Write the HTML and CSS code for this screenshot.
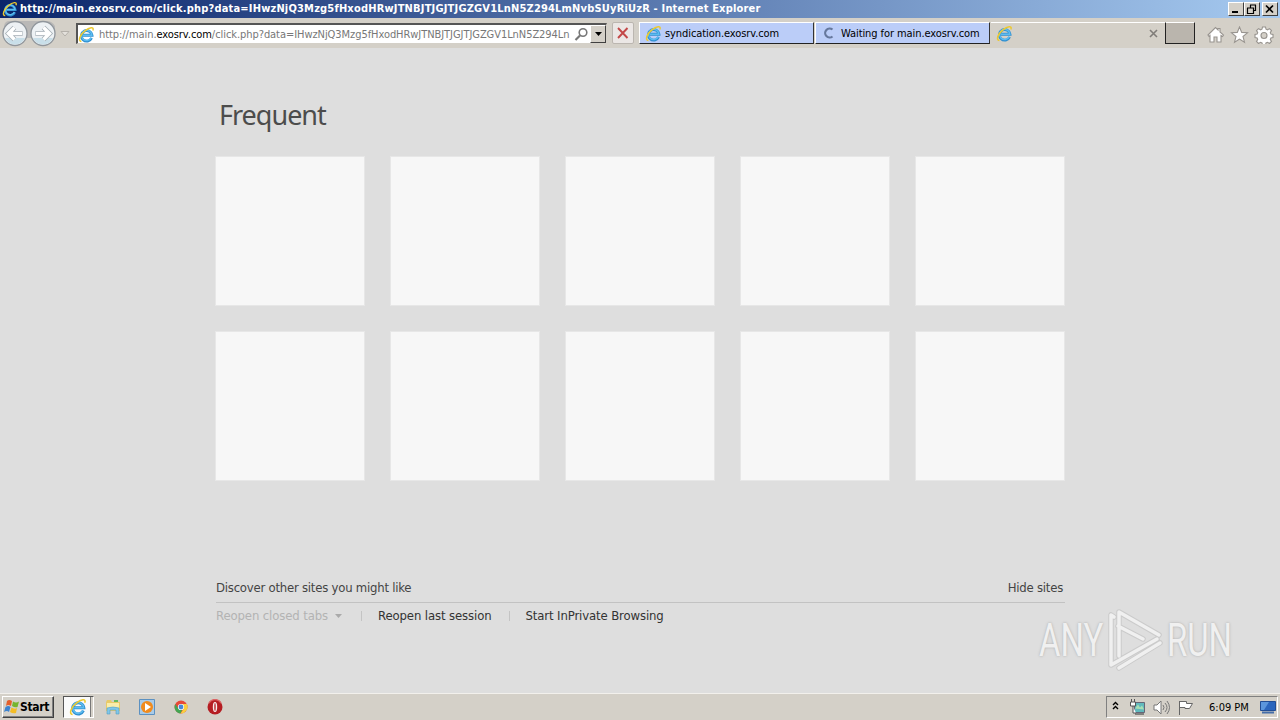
FILE: index.html
```
<!DOCTYPE html>
<html lang="en">
<head>
    <meta charset="UTF-8">
    <title>Internet Explorer</title>
    <link rel="stylesheet" href="styles.css">
</head>
<body>
    <!-- Shared IE logo -->
    <svg class="defs" width="0" height="0">
        <symbol id="ie" viewBox="0 0 16 16">
            <path d="M12.8 11.3A5 5 0 1 1 13.2 8.7H4.4" fill="none" stroke="#2f8fd0" stroke-width="2.6"/>
            <path d="M12.5 11A4.8 4.8 0 1 1 13 8.6H4.6" fill="none" stroke="#5cbcf0" stroke-width="1.4"/>
            <path d="M3.2 14.6C-.4 14.4 1.800 8.200 6.500 4.600C10.500 1.200 15.600 .2 14 4.200" fill="none" stroke="#ecc92f" stroke-width="1.400"/>
        </symbol>
    </svg>

    <div class="titlebar">
        <svg class="title-icon" width="16" height="16"><use href="#ie"/></svg>
        <span class="title-text">http://main.exosrv.com/click.php?data=IHwzNjQ3Mzg5fHxodHRwJTNBJTJGJTJGZGV1LnN5Z294LmNvbSUyRiUzR - Internet Explorer</span>
        <div class="window-buttons">
            <span class="win-btn"><svg width="14" height="12"><path d="M3 9h6" stroke="#000" stroke-width="2"/></svg></span>
            <span class="win-btn"><svg width="14" height="12"><path d="M5 2h6M5.500 2v3M10.500 2v5.500H9M2 5h7M2.500 5v5.500h6V5" fill="none" stroke="#000" stroke-width="1.200"/></svg></span>
            <span class="win-btn close"><svg width="14" height="12"><path d="M3 2.500l7 7M10 2.500l-7 7" stroke="#000" stroke-width="1.700"/></svg></span>
        </div>
    </div>

    <div class="navbar">
        <svg class="nav-arrows" width="58" height="28" viewBox="0 0 58 28">
            <path d="M9 2h38q5 0 8 5v12H4V7q1-5 5-5z" fill="#b9b8b7"/>
            <circle cx="15" cy="14.5" r="12" fill="#edf1f4" stroke="#90969c" stroke-width="1.3"/>
            <circle cx="43" cy="14.5" r="12" fill="#edf1f4" stroke="#90969c" stroke-width="1.3"/>
            <path d="M5 19a11 11 0 0 0 20 0zM33 19a11 11 0 0 0 20 0z" fill="#c9dfe9"/>
            <path d="M22.500 14.500H10M14.500 8.500l-6 6 6 6M35.500 14.500H48M43.500 8.500l6 6-6 6" fill="none" stroke="#a3adb4" stroke-width="5"/>
            <path d="M22 14.500H10M14.500 8.500l-6 6 6 6M36 14.500H48M43.500 8.500l6 6-6 6" fill="none" stroke="#fff" stroke-width="3.500"/>
        </svg>
        <svg class="nav-history" width="10" height="8"><path d="M1 1.500h8L5 6z" fill="#e4e1dc" stroke="#b5b1ab"/></svg>
        <div class="address">
            <svg width="17" height="17"><use href="#ie"/></svg>
            <span class="url">http://main.<b>exosrv.com</b>/click.php?data=IHwzNjQ3Mzg5fHxodHRwJTNBJTJGJTJGZGV1LnN5Z294Ln</span>
            <svg class="search" width="15" height="15"><circle cx="9" cy="5.500" r="3.800" fill="none" stroke="#777" stroke-width="1.600"/><path d="M6 8.500L1.500 13" stroke="#777" stroke-width="2.200"/></svg>
            <span class="dropdown"><svg width="7" height="4"><path d="M0 0h7L3.500 4z"/></svg></span>
        </div>
        <span class="stop"><svg width="12" height="12"><path d="M1 1l9.500 10M10.500 1L1 11" stroke="#c34848" stroke-width="1.900"/></svg></span>
        <div class="tab">
            <svg width="17" height="17"><use href="#ie"/></svg>
            <span class="tab-first">syndication.exosrv.com</span>
        </div>
        <div class="tab">
            <svg width="16" height="16"><path d="M11.500 4.500A4.500 4.500 0 1 0 11.500 11.500" fill="none" stroke="#66789d" stroke-width="2.200"/></svg>
            <span class="tab-second">Waiting for main.exosrv.com</span>
        </div>
        <div class="tab active">
            <svg width="17" height="17"><use href="#ie"/></svg>
            <svg class="tab-close" width="9" height="9"><path d="M1 1l7 7M8 1L1 8" stroke="#807d79" stroke-width="1.600"/></svg>
        </div>
        <span class="new-tab"></span>
        <svg class="tools" width="68" height="18" viewBox="0 0 68 18" fill="#fff" stroke="#98948f" stroke-width="1.100">
            <path d="M1 9l7.500-7.500 2.500 2.400V2.500h2v3.500L16.500 9l-1 1.500-1.500-1V16h-4v-5H7v5H3V9.500L2 10.500z"/>
            <path d="M32.500 1l2.200 5.400 5.800.4-4.500 3.700 1.500 5.700-5-3.100-5 3.100 1.500-5.700-4.500-3.700 5.800-.4z"/>
            <path d="M55.500 1h3l.5 2.200 1.500.6 2-1.200 2 2-1.200 2 .6 1.500 2.100.4v3l-2.100.5-.6 1.500 1.200 2-2 2-2-1.200-1.500.6-.5 2.100h-3l-.5-2.100-1.500-.6-2 1.200-2-2 1.200-2-.6-1.500-2.100-.5v-3l2.100-.4.600-1.500-1.200-2 2-2 2 1.200 1.500-.6z"/>
            <circle cx="57" cy="9.500" r="3" fill="#d4d0c8"/>
        </svg>
    </div>

    <div class="page">
        <div class="content">
            <h1>Frequent</h1>
            <div class="tiles">
                <div class="tile"></div>
                <div class="tile"></div>
                <div class="tile"></div>
                <div class="tile"></div>
                <div class="tile"></div>
                <div class="tile"></div>
                <div class="tile"></div>
                <div class="tile"></div>
                <div class="tile"></div>
                <div class="tile"></div>
            </div>
            <div class="discover">
                <span class="link-discover">Discover other sites you might like</span>
                <span class="link-hide">Hide sites</span>
            </div>
            <div class="links">
                <span class="link-closed">Reopen closed tabs</span>
                <svg class="caret" width="7" height="4"><path d="M0 0h7L3.500 4z" fill="#aaa"/></svg>
                <span class="link-last">Reopen last session</span>
                <span class="link-private">Start InPrivate Browsing</span>
            </div>
        </div>

        <!-- Watermark -->
        <div class="watermark">
            <span class="any">ANY</span>
            <svg width="58" height="64" viewBox="0 0 58 64" fill="none" stroke-linejoin="round" stroke-linecap="round">
                <g stroke="#cbcbcb" stroke-width="5.500">
                    <path d="M12 48V4l40 23M7 9L4 7v50l46-26M11 18l25 13M12 60l41-25"/>
                </g>
                <g stroke="#f0f0f0" stroke-width="3.500">
                    <path d="M12 48V4l40 23M7 9L4 7v50l46-26M11 18l25 13M12 60l41-25"/>
                </g>
            </svg>
            <span class="run">RUN</span>
        </div>
    </div>

    <div class="taskbar">
        <div class="start">
            <svg width="16" height="16" viewBox="0 0 16 16">
                <path d="M3 2q2-2 5 0L7 7Q4 5 2 7z" fill="#e5602b"/>
                <path d="M9 2.500q3 2 6 0L13.500 8Q11 9 8 7z" fill="#75b530"/>
                <path d="M1.500 8q3-2 5 0L5 13Q3 11 0 13z" fill="#3d83cf"/>
                <path d="M7.500 8.500q3 2 5.500.5L12 14q-3 1-6-1z" fill="#f4bd26"/>
            </svg>
            <span>Start</span>
        </div>
        <div class="task-ie"><svg width="18" height="18"><use href="#ie"/></svg></div>
        <svg class="explorer" width="16" height="16">
            <path d="M1 3l1-2h4l1 2h8v9H1z" fill="#e8ca68"/>
            <path d="M2 4h12v6H2z" fill="#f9edab"/>
            <path d="M9 2h4" stroke="#65b960" stroke-width="2"/>
            <path d="M2 15V9q6-2 12 0v6h-3v-4H5v4z" fill="#80c7e8" stroke="#539fc4" stroke-width=".6"/>
        </svg>
        <svg class="player" width="16" height="16">
            <path d="M.5.5h15v15H.5z" fill="#a9cbe8" stroke="#5c91c1"/>
            <circle cx="8" cy="8" r="6" fill="#f18b1d"/>
            <path d="M6 4l6 4-6 4z" fill="#fff"/>
        </svg>
        <svg class="chrome" width="14" height="14" viewBox="0 0 14 14">
            <circle cx="7" cy="7" r="6.500" fill="#e74938"/>
            <path d="M1.300 4A6.500 6.500 0 0 0 6.500 13.500L9 8 4 8z" fill="#43a553"/>
            <path d="M7 4h5.800A6.500 6.500 0 0 1 6.500 13.500L9.500 9z" fill="#f9cf40"/>
            <circle cx="7" cy="7" r="3.100" fill="#fff"/>
            <circle cx="7" cy="7" r="2.400" fill="#4787d9"/>
        </svg>
        <svg class="opera" width="16" height="16">
            <circle cx="8" cy="8" r="7.500" fill="#b51d22"/>
            <path d="M2 4a7 7 0 0 1 12 0" fill="none" stroke="#dc6465" stroke-width="1.500"/>
            <ellipse cx="8" cy="8" rx="2.200" ry="5" fill="#f8eded"/>
            <ellipse cx="8" cy="8" rx=".7" ry="4" fill="#b51d22"/>
        </svg>
        <div class="tray">
            <svg class="chevrons" width="7" height="9"><path d="M1 4l2.500-2.500L6 4M1 8l2.500-2.500L6 8" fill="none" stroke="#000" stroke-width="1.400"/></svg>
            <svg class="network" width="17" height="16">
                <path d="M5.500 3.500h10v10h-10z" fill="#61b9bd" stroke="#667"/>
                <path d="M6 9.500l3-4 2 3 2-2 2 4" fill="#a8dfb4"/>
                <path d="M6 15h9" stroke="#666" stroke-width="1.500"/>
                <path d="M1.500 3h5v4h-5zM2.500 0v3M5.500 0v3M4 7v7h3" fill="#fff" stroke="#555"/>
            </svg>
            <svg class="volume" width="17" height="15" fill="none" stroke="#777">
                <path d="M1 5h3l4-4v13l-4-4H1z" fill="#fff"/>
                <path d="M10 5q2 2.500 0 5M12 3q4 4.500 0 9M14 1q5 6.500 0 13"/>
            </svg>
            <svg class="flag" width="17" height="15"><path d="M2.500 15V1M2.500 1.500h7v2h6l-3 5H8v-1H2.500" fill="#fff" stroke="#666"/></svg>
            <span class="clock">6:09 PM</span>
            <svg class="desktop" width="16" height="13"><path d="M.5.500h15v9H.5z" fill="#2b66bd" stroke="#214d94"/><path d="M1 1h8L4 9H1z" fill="#5b96dc"/><path d="M2 11.500h12" stroke="#446da8" stroke-width="2"/></svg>
        </div>
    </div>
</body>
</html>
```
FILE: styles.css
```
* {
    box-sizing: border-box;
}
body {
    margin: 0;
    width: 1280px;
    height: 720px;
    overflow: hidden;
    display: flex;
    flex-direction: column;
    background: #dedede;
    font-family: "DejaVu Sans Condensed", "DejaVu Sans", sans-serif;
    font-stretch: condensed;
    font-size: 11px;
    color: #000;
}
svg {
    display: block;
    flex: none;
}
span {
    white-space: nowrap;
}
.defs {
    position: absolute;
}

/* Title bar */
.titlebar {
    height: 18px;
    flex: none;
    display: flex;
    align-items: center;
    padding: 0 2px;
    background: linear-gradient(to right, #0a246a, #a6caf0);
    color: #fff;
}
.title-text {
    margin-left: 2px;
    font-weight: bold;
    line-height: 18px;
    letter-spacing: 0.184px;
}
.window-buttons {
    margin-left: auto;
    display: flex;
}
.win-btn {
    width: 16px;
    height: 14px;
    background: #d4d0c8;
    border: 1px solid;
    border-color: #fff #404040 #404040 #fff;
}
.win-btn.close {
    margin-left: 2px;
}

/* Address bar and tabs */
.navbar {
    height: 30px;
    flex: none;
    display: flex;
    align-items: flex-start;
    background: #d4d0c8;
}
.nav-arrows {
    margin-top: 1px;
}
.nav-history {
    margin: 12px 0 0 2px;
}
.address {
    width: 531px;
    height: 21px;
    margin: 5px 0 0 6px;
    display: flex;
    align-items: center;
    background: #fff;
    border: 1px solid;
    border-width: 2px 1px 1px 2px;
    border-color: #555 #d4d0c8 #d4d0c8 #555;
}
.url {
    margin-left: 4px;
    color: #777;
    letter-spacing: -0.06px;
}
.url b {
    font-weight: normal;
    color: #000;
}
.search {
    margin-left: auto;
    margin-right: 1px;
}
.dropdown {
    width: 16px;
    height: 18px;
    display: flex;
    align-items: center;
    justify-content: center;
    background: #d4d0c8;
    border: 1px solid;
    border-color: #fff #404040 #404040 #fff;
}
.stop {
    width: 22px;
    height: 22px;
    margin: 4px 4px 0 5px;
    display: flex;
    align-items: center;
    justify-content: center;
    background: #ebe7e5;
    border: 1px solid #bbb6b0;
    border-radius: 2px;
}
.tab {
    width: 175px;
    height: 22px;
    margin: 4px 0 0 1px;
    padding-left: 5px;
    display: flex;
    align-items: center;
    background: #bbcdf8;
    border: 1px solid;
    border-color: #fff #333 #222 #fff;
}
.tab span {
    margin-left: 3px;
    letter-spacing: -0.08px;
}
.tab .tab-second {
    margin-left: 4px;
}
.tab.active {
    width: 174px;
    background: #d4d0c8;
    border-width: 1px 0 0;
}
.tab-close {
    margin-left: auto;
    margin-right: 7px;
}
.new-tab {
    width: 30px;
    height: 22px;
    margin-top: 4px;
    background: #bab5ad;
    border: 1px solid;
    border-color: #fff #222 #222 #222;
}
.tools {
    margin: 8px 0 0 12px;
}

/* New tab page */
.page {
    height: 645px;
    flex: none;
    position: relative;
    padding: 48px 215px 0 216px;
}
h1 {
    margin: 0 0 20px 3px;
    height: 41px;
    font-family: "Noto Sans", sans-serif;
    font-stretch: normal;
    font-size: 27px;
    font-weight: normal;
    line-height: 38px;
    letter-spacing: -1px;
    color: #4c4c4c;
}
.tiles {
    display: grid;
    grid-template-columns: repeat(5, 148px);
    gap: 27px;
}
.tile {
    height: 148px;
    background: #f7f7f7;
    outline: 1px solid #e7e7e7;
}
.discover {
    height: 26px;
    margin-top: 97px;
    display: flex;
    justify-content: space-between;
    align-items: flex-start;
    border-bottom: 1px solid #c2c2c2;
    font-size: 13px;
    line-height: 22px;
    letter-spacing: -0.23px;
    color: #444;
}
.link-hide {
    margin-right: 2px;
}
.links {
    display: flex;
    align-items: center;
    padding-top: 2px;
    font-size: 13px;
    line-height: 22px;
    letter-spacing: -0.12px;
    color: #333;
}
.link-closed {
    color: #b3b3b3;
}
.caret {
    margin-left: 7px;
}
.link-last,
.link-private {
    margin-left: 17px;
    padding-left: 19px;
    background: linear-gradient(#c4c4c4, #c4c4c4) 2px 6px / 1px 10px no-repeat;
}
.link-private {
    margin-left: 15px;
}
.watermark {
    position: absolute;
    left: 1039px;
    top: 560px;
    display: flex;
    align-items: center;
    font-family: Roboto, sans-serif;
    font-stretch: normal;
    font-size: 47px;
    line-height: 64px;
    color: #f0f0f0;
    text-shadow: 0 0 3px #a8a8a8;
}
.watermark svg {
    margin: 0 2px 0 4px;
}
.any,
.run {
    width: 64px;
    transform: scaleX(.7);
    transform-origin: left;
}

/* Taskbar */
.taskbar {
    height: 27px;
    flex: none;
    display: flex;
    align-items: center;
    padding: 1px 2px 1px 2px;
    background: #d4d0c8;
    border-top: 1px solid #f2f0ec;
}
.start {
    width: 52px;
    height: 22px;
    display: flex;
    align-items: center;
    padding-left: 1px;
    border: 1px solid;
    border-color: #fff #404040 #404040 #fff;
    box-shadow: inset -1px -1px #808080;
    font-size: 12px;
    font-weight: bold;
    letter-spacing: -0.3px;
}
.task-ie {
    width: 31px;
    height: 22px;
    margin-left: 9px;
    padding: 1px 0 0 5px;
    background: linear-gradient(to right, #fafafa 26px, #777 26px, #777 27px, #d4d0c8 27px);
    border: 1px solid;
    border-color: #555 #fff #fff #555;
}
.explorer {
    margin-left: 11px;
}
.player {
    margin-left: 18px;
}
.chrome {
    margin-left: 19px;
}
.opera {
    margin-left: 19px;
}
.tray {
    width: 172px;
    height: 22px;
    margin-left: auto;
    display: flex;
    align-items: center;
    padding-left: 5px;
    border: 1px solid;
    border-color: #808080 #fff #fff #808080;
}
.chevrons {
    margin-bottom: 3px;
}
.network {
    margin-left: 10px;
}
.volume {
    margin-left: 7px;
}
.flag {
    margin-left: 7px;
}
.clock {
    margin-left: 15px;
}
.desktop {
    margin-left: auto;
    margin-right: 1px;
}
```
